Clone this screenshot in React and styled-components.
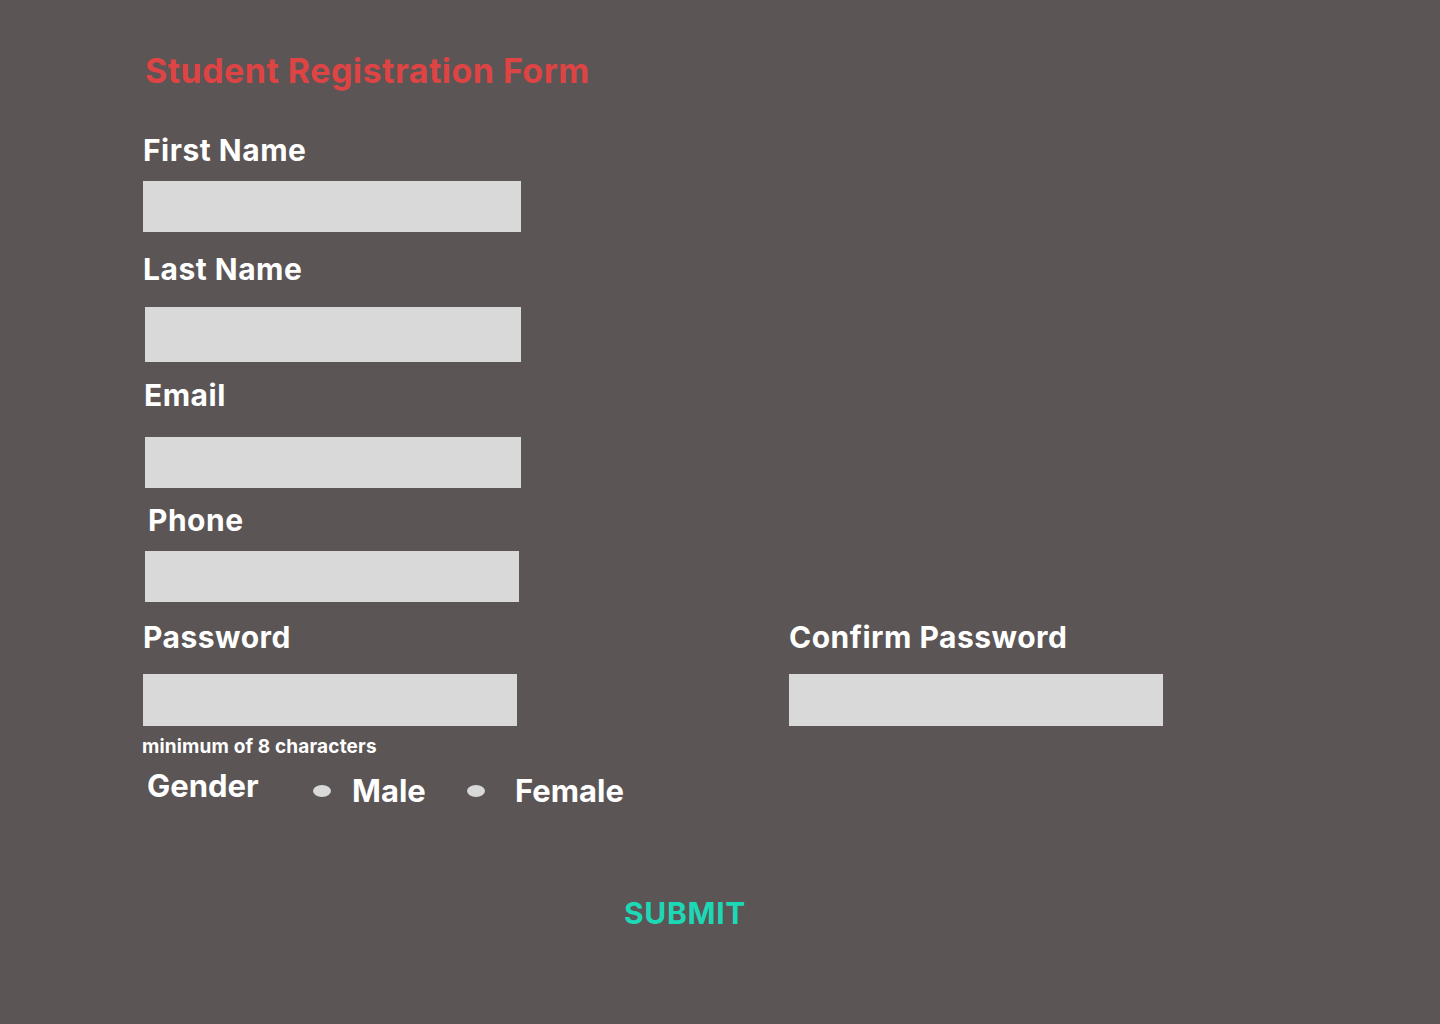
import React from "react";
import styled, { createGlobalStyle } from "styled-components";

const Global = createGlobalStyle`
  html, body { margin: 0; padding: 0; background: #5b5555; }
  body { font-family: Inter, "Noto Sans", Arial, sans-serif; }
  * { box-sizing: border-box; }
`;

const Page = styled.main`
  min-height: 1024px;
  background: #5b5555;
  padding: 51px 0 0 141px;
  display: flex;
  flex-direction: column;
  align-items: flex-start;
`;

const Title = styled.h1`
  margin: 0 0 0 4px;
  font-size: 34px;
  line-height: 40px;
  font-weight: 700;
  letter-spacing: 0.45px;
  color: #de4444;
`;

const Label = styled.label`
  display: block;
  margin: ${(p) => p.$top || 0}px 0 0 ${(p) => p.$x || 0}px;
  font-size: 30px;
  line-height: 36px;
  font-weight: 700;
  letter-spacing: 0.5px;
  color: #ffffff;
`;

const Input = styled.input`
  display: block;
  margin: ${(p) => p.$top || 0}px 0 0 ${(p) => p.$x || 0}px;
  width: ${(p) => p.$w || 376}px;
  height: ${(p) => p.$h || 51}px;
  border: none;
  outline: none;
  background: #d9d9d9;
  padding: 0 12px;
  font-family: inherit;
  font-size: 18px;
`;

const PasswordGrid = styled.div`
  margin-top: 17px;
  display: grid;
  grid-template-columns: 647px auto;
  row-gap: 19px;
`;

const Hint = styled.p`
  margin: 10px 0 0 1px;
  font-size: 19px;
  line-height: 22px;
  font-weight: 700;
  letter-spacing: 0.15px;
  color: #ffffff;
`;

const GenderRow = styled.div`
  margin-top: 10px;
  display: flex;
  align-items: flex-start;
`;

const GenderLabel = styled.span`
  width: 172px;
  padding-left: 6px;
  font-size: 31px;
  line-height: 36px;
  font-weight: 700;
  color: #ffffff;
`;

const Option = styled.label`
  display: flex;
  align-items: flex-start;
  width: ${(p) => (p.$w ? `${p.$w}px` : "auto")};
  gap: ${(p) => p.$gap}px;
`;

const Radio = styled.span`
  flex: none;
  margin-top: 17px;
  width: 18px;
  height: 12px;
  border-radius: 50%;
  background: #d9d9d9;
`;

const OptionText = styled.span`
  margin-top: 5px;
  font-size: 31px;
  line-height: 36px;
  font-weight: 700;
  color: #ffffff;
`;

const Submit = styled.button`
  margin: 86px 0 0 483px;
  padding: 0;
  border: none;
  background: transparent;
  font-family: inherit;
  font-size: 30px;
  line-height: 36px;
  font-weight: 700;
  letter-spacing: 0.7px;
  color: #1dd8b6;
  cursor: pointer;
`;

export default function App() {
  return (
    <>
      <Global />
      <Page>
        <Title>Student Registration Form</Title>

        <Label $top={41} $x={2}>First Name</Label>
        <Input $top={13} $x={2} $w={378} $h={51} />

        <Label $top={19} $x={2}>Last Name</Label>
        <Input $top={20} $x={4} $w={376} $h={55} />

        <Label $top={15} $x={3}>Email</Label>
        <Input $top={24} $x={4} $w={376} $h={51} />

        <Label $top={14} $x={7}>Phone</Label>
        <Input $top={13} $x={4} $w={374} $h={51} />

        <PasswordGrid>
          <Label $x={2}>Password</Label>
          <Label $x={1}>Confirm Password</Label>
          <Input $x={2} $w={374} $h={52} type="password" />
          <Input $x={1} $w={374} $h={52} type="password" />
        </PasswordGrid>

        <Hint>minimum of 8 characters</Hint>

        <GenderRow>
          <GenderLabel>Gender</GenderLabel>
          <Option $w={154} $gap={21}>
            <Radio />
            <OptionText>Male</OptionText>
          </Option>
          <Option $gap={30}>
            <Radio />
            <OptionText>Female</OptionText>
          </Option>
        </GenderRow>

        <Submit type="button">SUBMIT</Submit>
      </Page>
    </>
  );
}
